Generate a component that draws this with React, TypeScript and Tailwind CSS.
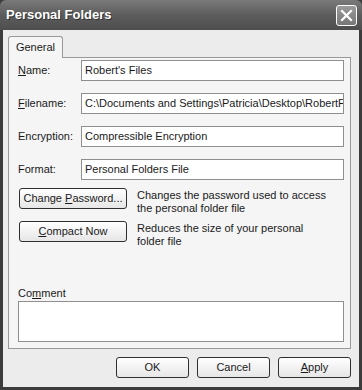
import React from 'react';

const font = { fontFamily: '"Liberation Sans", Arial, sans-serif' };

const Field: React.FC<{ label: React.ReactNode; value: string }> = ({ label, value }) => (
  <div className="flex items-center h-[21px]">
    <div className="w-[63px] text-[11px] text-[#1a1a1a]">{label}</div>
    <div className="flex-1 min-w-0 h-[21px] bg-white border border-[#8f8f8f] flex items-center px-[3px] text-[11px] text-[#1a1a1a] whitespace-nowrap overflow-hidden">
      {value}
    </div>
  </div>
);

const XpButton: React.FC<{ children: React.ReactNode; className?: string }> = ({ children, className }) => (
  <button
    className={`h-[21px] shrink-0 rounded-[3px] border border-[#2f2f2f] bg-gradient-to-b from-white to-[#e6e6e6] text-[11px] text-[#1a1a1a] ${className ?? ''}`}
  >
    <span>{children}</span>
  </button>
);

export default function App() {
  return (
    <div className="w-[362px] h-[390px] bg-[#3c3c3c] flex flex-col overflow-hidden" style={font}>
      {/* title bar */}
      <div className="h-[30px] rounded-t-[6px] bg-gradient-to-b from-[#7a7a7a] via-[#5c5c5c] to-[#4e4e4e] flex items-center justify-between pl-[6px] pr-[5px] shrink-0">
        <span className="text-white font-bold text-[13px]" style={{ textShadow: '1px 1px 0 #333' }}>
          Personal Folders
        </span>
        <div className="w-[21px] h-[21px] rounded-[3px] border border-white bg-gradient-to-b from-[#9a9a9a] to-[#777] flex items-center justify-center">
          <svg width="13" height="13" viewBox="0 0 13 13">
            <path d="M2 2 L11 11 M11 2 L2 11" stroke="white" strokeWidth="2.2" strokeLinecap="square" />
          </svg>
        </div>
      </div>

      {/* body */}
      <div className="flex-1 mx-[3px] mb-[3px] bg-[#ececec] flex flex-col pt-[6px] pl-[5px] pr-[8px]">
        {/* tab */}
        <div className="flex">
          <div className="w-[55px] h-[22px] bg-[#f5f5f5] border border-b-0 border-[#999] rounded-t-[3px] text-[11px] text-[#1a1a1a] flex items-center justify-center -mb-px relative z-10">
            General
          </div>
        </div>
        <div className="h-[292px] bg-[#f5f5f5] border border-[#999] flex flex-col pl-[9px] pr-[6px] pt-[2px]">
          <div className="flex flex-col gap-[12px]">
            <Field label={<><u>N</u>ame:</>} value="Robert's Files" />
            <Field label={<><u>F</u>ilename:</>} value="C:\Documents and Settings\Patricia\Desktop\RobertF" />
            <Field label="Encryption:" value="Compressible Encryption" />
            <Field label="Format:" value="Personal Folders File" />
          </div>

          <div className="flex h-[26px] mt-[8px] ml-px">
            <XpButton className="w-[108px]">
              Change <u>P</u>assword...
            </XpButton>
            <p className="ml-[10px] text-[11px] leading-[13px] text-[#1a1a1a] pt-px">
              Changes the password used to access
              <br />
              the personal folder file
            </p>
          </div>
          <div className="flex h-[26px] mt-[7px] ml-px">
            <XpButton className="w-[108px]">
              <u>C</u>ompact Now
            </XpButton>
            <p className="ml-[10px] text-[11px] leading-[13px] text-[#1a1a1a] pt-px">
              Reduces the size of your personal
              <br />
              folder file
            </p>
          </div>

          <div className="mt-[39px] h-[14px] text-[11px] leading-[14px] text-[#1a1a1a]">
            Co<u>m</u>ment
          </div>
          <div className="mt-[1px] h-[41px] bg-white border border-[#8f8f8f]" />
        </div>

        {/* bottom buttons */}
        <div className="flex justify-end gap-[8px] mt-[8px]">
          <XpButton className="w-[73px]">OK</XpButton>
          <XpButton className="w-[73px]">Cancel</XpButton>
          <XpButton className="w-[73px]">
            <u>A</u>pply
          </XpButton>
        </div>
      </div>
    </div>
  );
}
